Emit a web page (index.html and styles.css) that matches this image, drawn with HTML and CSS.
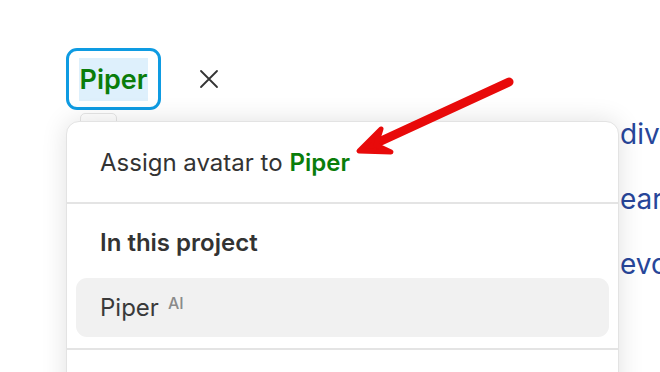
FILE: index.html
```html
<!DOCTYPE html>
<html>
<head>
<meta charset="utf-8">
<link rel="stylesheet" href="styles.css">
</head>
<body>
<div class="page">
  <div class="chip-row">
    <div class="chip"><span class="chip-text">Piper</span></div>
    <svg class="close" width="20" height="20" viewBox="0 0 20 20"><path d="M2 2L18 18M18 2L2 18" stroke="#333" stroke-width="1.8" fill="none" stroke-linecap="round"/></svg>
  </div>
  <div class="bg-text">
    <div class="bg-line">divi</div>
    <div class="bg-line">ear</div>
    <div class="bg-line">evo</div>
  </div>
  <div class="tab"></div>
  <div class="menu">
    <div class="menu-head">Assign avatar to <b class="green">Piper</b></div>
    <div class="menu-section">
      <div class="section-title">In this project</div>
      <div class="item">Piper <sup class="ai">AI</sup></div>
    </div>
    <div class="menu-rest"></div>
  </div>
  <svg class="arrow" width="660" height="372" viewBox="0 0 660 372">
    <line x1="509" y1="82" x2="368" y2="147" stroke="#e80a0a" stroke-width="9" stroke-linecap="round"/>
    <path d="M381 129 L359 151 L391 152 L376 145 Z" fill="#e80a0a" stroke="#e80a0a" stroke-width="5" stroke-linejoin="round"/>
  </svg>
</div>
</body>
</html>
```

FILE: styles.css
```css
html, body {
  margin: 0;
  padding: 0;
  background: #fff;
  width: 660px;
  height: 372px;
  overflow: hidden;
}
.page {
  position: relative;
  width: 660px;
  height: 372px;
  overflow: hidden;
  font-family: Inter, "Noto Sans", sans-serif;
  padding: 48px 0 0 66px;
  box-sizing: border-box;
}
.chip-row {
  display: flex;
  align-items: center;
  gap: 38px;
}
.chip {
  width: 95px;
  height: 62px;
  box-sizing: border-box;
  border: 3px solid #0e9be2;
  border-radius: 11px;
  display: flex;
  align-items: center;
  justify-content: center;
}
.chip-text {
  background: #def0fc;
  color: #0a7d0a;
  font-weight: 600;
  font-size: 27px;
  line-height: 43px;
  width: 69px;
  text-align: center;
  white-space: nowrap;
}
.close {
  display: block;
}
.bg-text {
  position: absolute;
  left: 620px;
  top: 102px;
  color: #27469a;
  font-size: 28px;
  line-height: 65px;
}
.tab {
  position: absolute;
  left: 80px;
  top: 113px;
  width: 35px;
  height: 14px;
  border: 1px solid #e6e6e6;
  border-radius: 5px 5px 0 0;
  background: #fff;
}
.menu {
  position: absolute;
  left: 66px;
  top: 121px;
  width: 553px;
  height: 300px;
  box-sizing: border-box;
  background: #fff;
  border: 1px solid #e3e3e3;
  border-radius: 13px;
  box-shadow: 0 0 26px rgba(0,0,0,0.12);
  color: #333;
  z-index: 2;
}
.menu-head {
  height: 82px;
  box-sizing: border-box;
  padding-left: 33px;
  display: flex;
  align-items: center;
  font-size: 24px;
  border-bottom: 2px solid #e4e4e4;
}
.green {
  color: #0a7d0a;
  font-weight: 600;
  margin-left: 7px;
}
.menu-section {
  padding: 21px 9px 11px 9px;
  border-bottom: 2px solid #e4e4e4;
}
.section-title {
  padding-left: 24px;
  font-size: 24px;
  font-weight: 600;
  line-height: 36px;
  margin-bottom: 17px;
}
.item {
  height: 59px;
  border-radius: 11px;
  background: #f1f1f1;
  padding-left: 24px;
  display: flex;
  align-items: center;
  font-size: 24px;
  color: #3a3a3a;
}
.ai {
  font-size: 16px;
  font-weight: 500;
  color: #8a8a8a;
  margin-left: 9px;
  position: relative;
  top: -5px;
  line-height: 1;
}
.arrow {
  position: absolute;
  left: 0;
  top: 0;
  z-index: 3;
  pointer-events: none;
}
```
